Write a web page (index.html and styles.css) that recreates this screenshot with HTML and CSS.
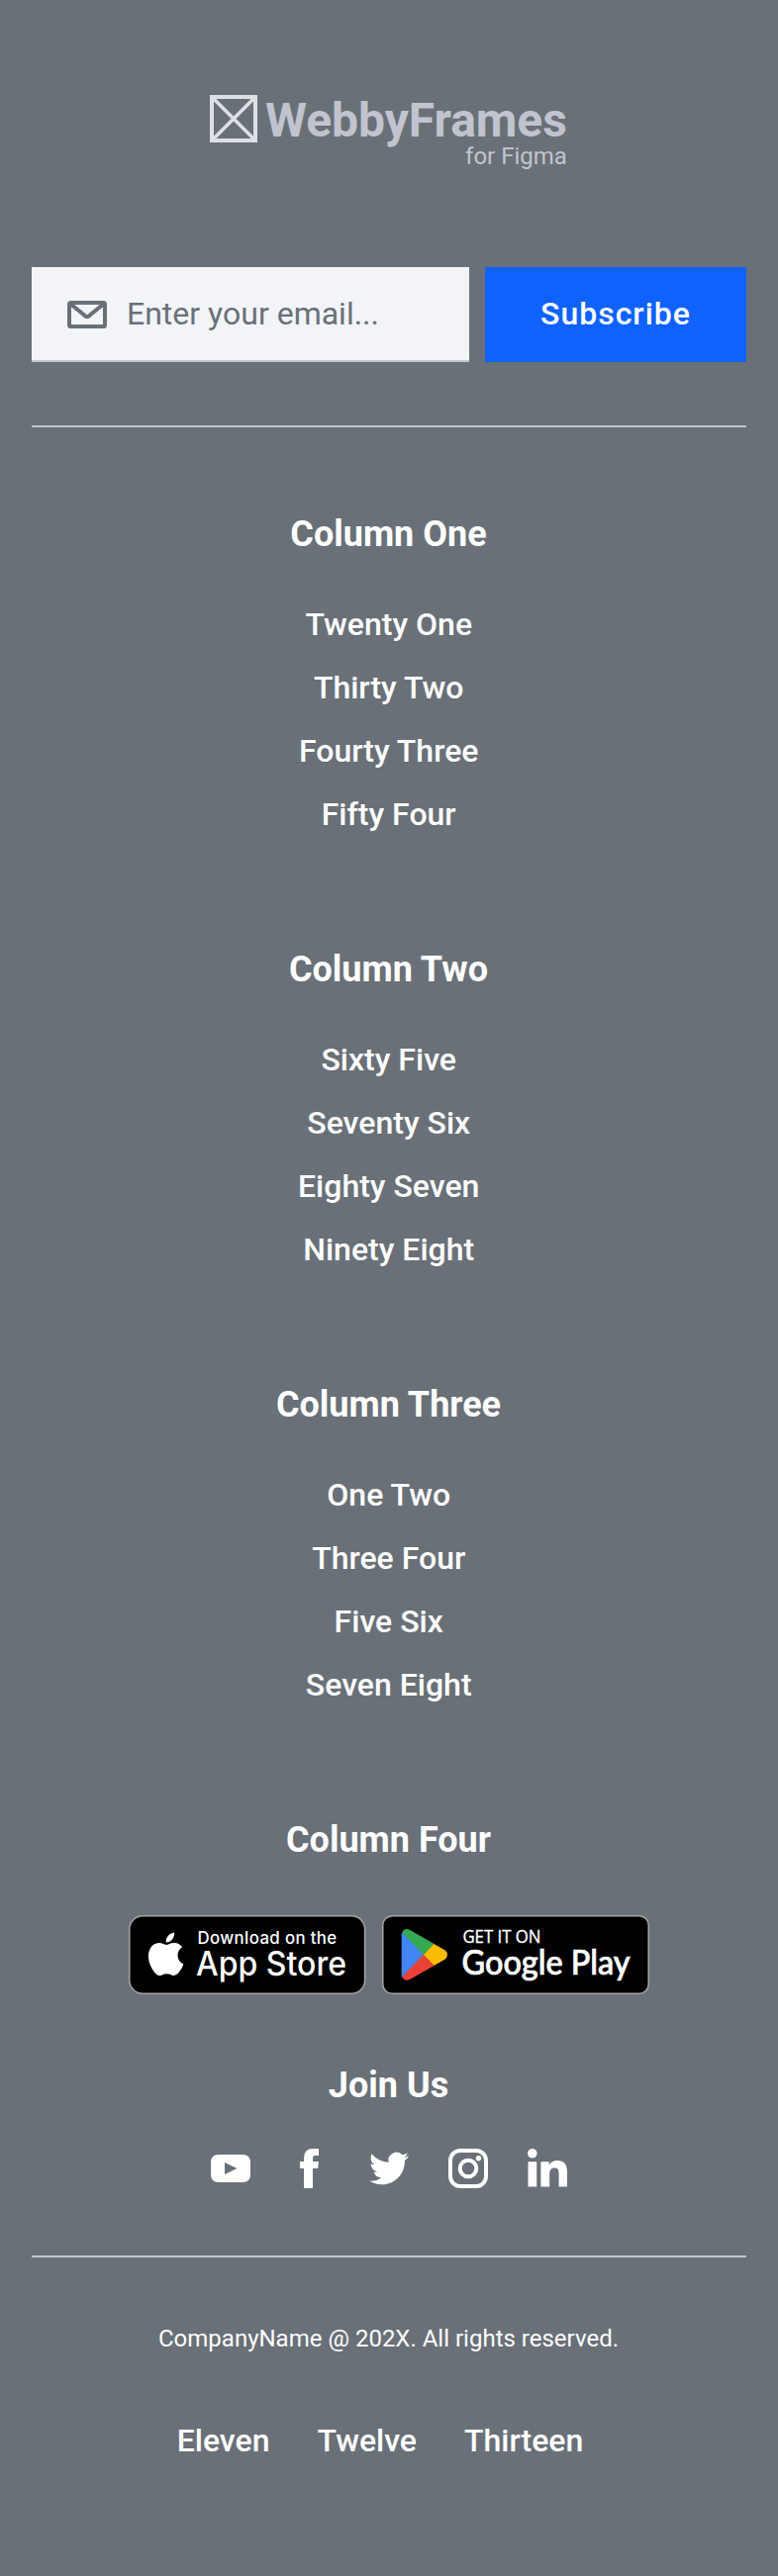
FILE: index.html
```html
<!DOCTYPE html>
<html lang="en">
<head>
<meta charset="utf-8">
<title>WebbyFrames</title>
<link rel="stylesheet" href="styles.css">
</head>
<body>
<footer class="footer">
  <div class="logo">
    <svg class="logo-mark" viewBox="0 0 48 48"><path d="M2 2H46V46H2Z" stroke-width="4"/><path d="M4 4L44 44M44 4L4 44" stroke-width="3.6"/></svg>
    <div class="logo-words">
      <div class="logo-name">WebbyFrames</div>
      <div class="logo-sub">for Figma</div>
    </div>
  </div>

  <form class="signup">
    <div class="field">
      <svg class="mail" viewBox="0 0 40 28"><rect x="2" y="2" width="36" height="24" rx="1.6"/><path d="M3 3L17.4 14.8Q20 17.6 22.6 14.8L37 3"/></svg>
      <span class="placeholder">Enter your email...</span>
    </div>
    <button class="subscribe" type="button">Subscribe</button>
  </form>

  <div class="rule"></div>

  <nav class="columns">
    <section class="column"><h2>Column One</h2><ul><li>Twenty One</li><li>Thirty Two</li><li>Fourty Three</li><li>Fifty Four</li></ul></section>
    <section class="column"><h2>Column Two</h2><ul><li>Sixty Five</li><li>Seventy Six</li><li>Eighty Seven</li><li>Ninety Eight</li></ul></section>
    <section class="column"><h2>Column Three</h2><ul><li>One Two</li><li>Three Four</li><li>Five Six</li><li>Seven Eight</li></ul></section>
  </nav>

  <section class="apps">
    <h2>Column Four</h2>
    <div class="badges">
      <svg class="badge-apple" viewBox="0 0 239.4 80">
        <rect x=".75" y=".75" width="237.9" height="78.5" rx="13.5" fill="#000" stroke="#a6a6a6" stroke-width="1.5"/>
        <g transform="scale(2)" fill="#fff"><path d="M24.769 20.301a4.949 4.949 0 012.357-4.152 5.066 5.066 0 00-3.991-2.158c-1.68-.176-3.308 1.005-4.164 1.005-.872 0-2.19-.987-3.608-.958a5.315 5.315 0 00-4.473 2.728c-1.934 3.348-.491 8.269 1.361 10.976.927 1.325 2.01 2.805 3.428 2.753 1.387-.058 1.905-.885 3.58-.885 1.658 0 2.144.885 3.59.852 1.489-.025 2.426-1.332 3.32-2.669a10.962 10.962 0 001.52-3.092 4.782 4.782 0 01-2.92-4.4z"/><path d="M22.037 12.211a4.872 4.872 0 001.115-3.49 4.957 4.957 0 00-3.208 1.66 4.636 4.636 0 00-1.144 3.36 4.1 4.1 0 003.237-1.53z"/></g>
        <text class="apple-small" x="69.6" y="29.2" textLength="140.6">Download on the</text>
        <text class="apple-large" x="68" y="60.6" textLength="152" lengthAdjust="spacingAndGlyphs">App Store</text>
      </svg>
      <svg class="badge-google" viewBox="0 0 270 80">
        <rect x=".75" y=".75" width="268.5" height="78.5" rx="9.5" fill="#000" stroke="#a6a6a6" stroke-width="1.5"/>
        <g transform="translate(-6 -16) scale(.33333)">
          <path fill="#4285f4" d="M80 99Q77 102 77 108V229Q77 234 80 237L146 168Z"/>
          <path fill="#34a853" d="M79 101Q85 86 101 92L176 135L143 168Z"/>
          <path fill="#fbbc04" d="M175 135L208 154Q216 159 216 168T208 182L175 201L143 168Z"/>
          <path fill="#ea4335" d="M143 168L176 201L102 243Q86 250 79 235Z"/>
        </g>
        <text class="google-small" x="81.4" y="27.7" textLength="79" lengthAdjust="spacingAndGlyphs">GET IT ON</text>
        <text class="google-large" x="80.6" y="59.6" textLength="170" lengthAdjust="spacingAndGlyphs">Google Play</text>
      </svg>
    </div>
  </section>

  <section class="join">
    <h2>Join Us</h2>
    <div class="social">
      <svg viewBox="0 0 40 40"><path fill-rule="evenodd" d="M8 6H32Q40 6 40 14V26Q40 34 32 34H8Q0 34 0 26V14Q0 6 8 6ZM14 14V26L26.4 20Z"/></svg>
      <svg viewBox="0 0 40 40"><path d="M29 0V7H25Q23 7 23 9.6V13H28.9L28.2 20H23V40H14V20H10V13H14V9.5Q14 0 23 0Z"/></svg>
      <svg viewBox="0 0 24 24"><path d="M23.953 4.57a10 10 0 01-2.825.775 4.958 4.958 0 002.163-2.723c-.951.555-2.005.959-3.127 1.184a4.92 4.92 0 00-8.384 4.482C7.69 8.095 4.067 6.13 1.64 3.162a4.822 4.822 0 00-.666 2.475c0 1.71.87 3.213 2.188 4.096a4.904 4.904 0 01-2.228-.616v.06a4.923 4.923 0 003.946 4.827 4.996 4.996 0 01-2.212.085 4.936 4.936 0 004.604 3.417 9.867 9.867 0 01-6.102 2.105c-.39 0-.779-.023-1.17-.067a13.995 13.995 0 007.557 2.209c9.053 0 13.998-7.496 13.998-13.985 0-.21 0-.42-.015-.63A9.935 9.935 0 0024 4.59z"/></svg>
      <svg viewBox="0 0 40 40"><g fill="none" stroke="#fff" stroke-width="4"><rect x="2" y="2" width="36" height="36" rx="10"/><circle cx="20" cy="20" r="8.3"/></g><circle cx="30.4" cy="9.7" r="2.7"/></svg>
      <svg viewBox="0 0 40 40"><circle cx="4.8" cy="4.8" r="4.8"/><path d="M.5 13.2H9.2V38.4H.5ZM13.4 13.2H21.6V16.6Q24.2 12 30 12C38 12 40 17.4 40 24V38.4H31.6V25.8C31.6 22.2 31 19.4 27.4 19.4C23.6 19.4 22.2 22 22.2 25.8V38.4H13.4Z"/></svg>
    </div>
  </section>

  <div class="rule"></div>

  <p class="copyright">CompanyName @ 202X. All rights reserved.</p>
  <div class="legal"><span>Eleven</span><span>Twelve</span><span>Thirteen</span></div>
</footer>
</body>
</html>
```
FILE: styles.css
```css
* { box-sizing: border-box; }
body { margin: 0; background: #697077; }
.footer {
  height: 2604px;
  padding: 96px 32px 0;
  display: flex;
  flex-direction: column;
  color: #fff;
  background: #697077;
  font-family: Roboto, "Liberation Sans", sans-serif;
  font-size: 32px;
}
svg { display: block; flex: none; }
h2 { margin: 0; padding-right: 1px; font-size: 36px; font-weight: 700; line-height: 40px; text-align: center; }
ul { margin: 39px 0 0; padding: 0 .6px 0 0; list-style: none; }
li { font-weight: 500; line-height: 64px; text-align: center; }

.logo { display: flex; width: 362px; margin-left: 180px; gap: 8px; height: 174px; color: #c1c4cf; }
.logo-mark { width: 48px; height: 48px; fill: none; stroke: #dde1e6; }
.logo-name { font-size: 48px; font-weight: 700; line-height: 52px; letter-spacing: -.06px; }
.logo-sub { font-size: 24px; line-height: 20px; text-align: right; }

.signup { display: flex; gap: 16px; height: 96px; }
.field {
  width: 442px;
  padding-left: 36px;
  display: flex;
  align-items: center;
  gap: 20px;
  background: #f2f4f8;
  border-bottom: 2px solid #c1c7cd;
  color: #697077;
}
.mail { width: 40px; height: 28px; margin-top: 2px; fill: none; stroke: #697077; stroke-width: 4; }
.subscribe {
  width: 264px;
  padding: 0 0 2px;
  border: 0;
  background: #0f62fe;
  color: #fff;
  font: 500 32px/32px Roboto, "Liberation Sans", sans-serif;
  letter-spacing: 1px;
}
.rule { flex: none; height: 2px; background: #c1c4cf; }
.signup + .rule { margin-top: 64px; }
.columns { margin-top: 88px; }
.column { height: 440px; }
.badges { display: flex; justify-content: center; gap: 16px; margin-top: 56px; }
.badge-apple { width: 239.4px; height: 80px; }
.badge-google { width: 270px; height: 80px; }
.badges text { fill: #fff; }
.apple-small { font: 500 16.8px Inter, sans-serif; }
.apple-large { font: 500 34px Inter, sans-serif; }
.google-small { font: 400 17.6px "Open Sans", sans-serif; stroke: #fff; stroke-width: .35px; }
.google-large { font: 500 34px Lato, sans-serif; stroke: #fff; stroke-width: .7px; }
.join { margin-top: 72px; }
.social { display: flex; justify-content: center; gap: 40px; margin: 44px 0 68px; fill: #fff; }
.social svg { width: 40px; height: 40px; }
.copyright { margin: 64px 0 0; padding-right: 1px; font-size: 24px; line-height: 36px; text-align: center; }
.legal { display: flex; justify-content: center; gap: 48px; margin-top: 65px; padding-right: 18px; font-weight: 500; line-height: 40px; }
```
